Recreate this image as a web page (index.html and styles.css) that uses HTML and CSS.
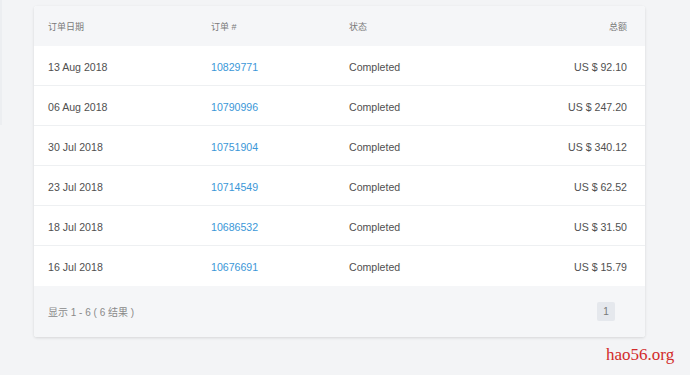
FILE: index.html
```html
<!DOCTYPE html>
<html lang="zh">
<head>
  <meta charset="UTF-8">
  <title>订单</title>
  <link rel="stylesheet" href="styles.css">
</head>
<body>
  <div class="side-edge"></div>

  <div class="page">
    <div class="orders-card">
      <div class="orders-row orders-head">
        <div>订单日期</div>
        <div>订单 #</div>
        <div>状态</div>
        <div class="amount">总额</div>
      </div>

      <div class="orders-row">
        <div>13 Aug 2018</div>
        <div><a href="#" class="order-link">10829771</a></div>
        <div>Completed</div>
        <div class="amount">US $ 92.10</div>
      </div>
      <div class="orders-row">
        <div>06 Aug 2018</div>
        <div><a href="#" class="order-link">10790996</a></div>
        <div>Completed</div>
        <div class="amount">US $ 247.20</div>
      </div>
      <div class="orders-row">
        <div>30 Jul 2018</div>
        <div><a href="#" class="order-link">10751904</a></div>
        <div>Completed</div>
        <div class="amount">US $ 340.12</div>
      </div>
      <div class="orders-row">
        <div>23 Jul 2018</div>
        <div><a href="#" class="order-link">10714549</a></div>
        <div>Completed</div>
        <div class="amount">US $ 62.52</div>
      </div>
      <div class="orders-row">
        <div>18 Jul 2018</div>
        <div><a href="#" class="order-link">10686532</a></div>
        <div>Completed</div>
        <div class="amount">US $ 31.50</div>
      </div>
      <div class="orders-row">
        <div>16 Jul 2018</div>
        <div><a href="#" class="order-link">10676691</a></div>
        <div>Completed</div>
        <div class="amount">US $ 15.79</div>
      </div>

      <div class="orders-foot">
        <div class="result-count">显示 1 - 6 ( 6 结果 )</div>
        <div class="pager">
          <span class="page-num">1</span>
        </div>
      </div>
    </div>
  </div>

  <div class="watermark">hao56.org</div>
</body>
</html>
```

FILE: styles.css
```css
* {
  margin: 0;
  padding: 0;
  box-sizing: border-box;
}

body {
  font-family: 'Liberation Sans', Arial, 'Noto Sans CJK SC', sans-serif;
  background: #f3f4f6;
  color: #505050;
  width: 690px;
  height: 375px;
  overflow: hidden;
  position: relative;
}

/* faint edge of the sidebar panel */
.side-edge {
  position: absolute;
  top: 0;
  left: 0;
  width: 2px;
  height: 125px;
  background: #eceef1;
}

.page {
  padding: 6px 0 0 34px;
}

.orders-card {
  width: 611px;
  background: #ffffff;
  border-radius: 3px;
  box-shadow: 0 1px 3px rgba(0, 0, 0, 0.12);
  overflow: hidden;
}

.orders-row {
  display: grid;
  grid-template-columns: 163px 138px 1fr 140px;
  align-items: center;
  height: 40px;
  padding: 2px 18px 0 14px;
  font-size: 10.6px;
  border-bottom: 1px solid #eef0f2;
}

.orders-head {
  padding-top: 1px;
  background: #f5f6f8;
  color: #7a7a7a;
  font-size: 9px;
  border-bottom: none;
}

.orders-row:nth-last-child(2) {
  border-bottom: none;
}

.amount {
  text-align: right;
}

.order-link {
  color: #3b97d8;
  text-decoration: none;
}

.orders-foot {
  display: flex;
  justify-content: space-between;
  align-items: center;
  height: 51px;
  padding: 0 30px 0 14px;
  background: #f5f6f8;
}

.result-count {
  font-size: 10px;
  color: #8a8a8a;
}

.page-num {
  display: flex;
  justify-content: center;
  align-items: center;
  width: 18px;
  height: 19px;
  border-radius: 2px;
  background: #e5e8ed;
  color: #777;
  font-size: 10px;
}

.watermark {
  position: absolute;
  left: 606px;
  top: 345px;
  font-family: 'Liberation Serif', serif;
  font-size: 17px;
  color: #d22b2b;
}
```
